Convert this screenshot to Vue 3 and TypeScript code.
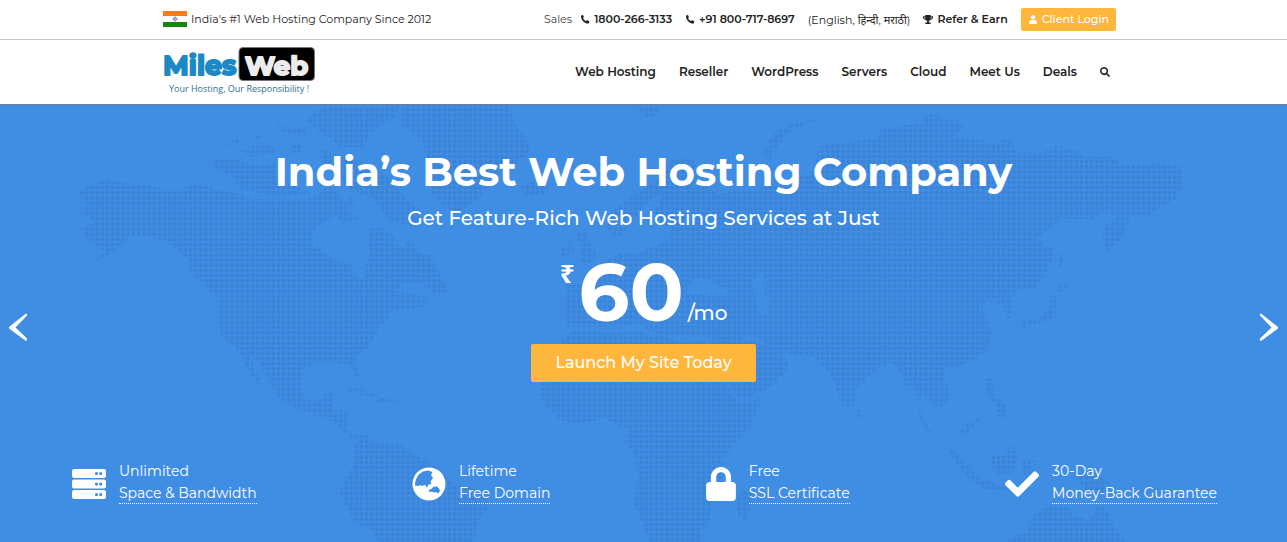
<script setup lang="ts">
interface NavItem {
  label: string
  href: string
}

interface Feature {
  icon: 'server' | 'globe' | 'lock' | 'check'
  title: string
  detail: string
}

const nav: NavItem[] = [
  { label: 'Web Hosting', href: '#web-hosting' },
  { label: 'Reseller', href: '#reseller' },
  { label: 'WordPress', href: '#wordpress' },
  { label: 'Servers', href: '#servers' },
  { label: 'Cloud', href: '#cloud' },
  { label: 'Meet Us', href: '#meet-us' },
  { label: 'Deals', href: '#deals' },
]

const phones: string[] = ['1800-266-3133', '+91 800-717-8697']

const features: Feature[] = [
  { icon: 'server', title: 'Unlimited', detail: 'Space & Bandwidth' },
  { icon: 'globe', title: 'Lifetime', detail: 'Free Domain' },
  { icon: 'lock', title: 'Free', detail: 'SSL Certificate' },
  { icon: 'check', title: '30-Day', detail: 'Money-Back Guarantee' },
]

// Coastlines of the dotted world map behind the banner.
const land: string[] = [
  // North and Central America
  '78,88 90,80 110,74 125,78 150,81 175,87 190,80 205,79 215,84 235,88 250,94 275,94 300,95 315,92 325,83 335,82 338,92 345,97 352,92 355,100 345,103 350,112 340,108 325,116 312,127 312,138 320,145 335,155 350,158 355,170 362,175 366,160 370,150 368,124 380,122 392,130 398,142 404,142 410,134 418,148 430,155 430,176 405,178 396,186 410,188 430,194 425,201 405,204 390,205 388,216 378,220 376,230 370,240 358,250 355,256 360,272 356,272 350,260 335,258 315,258 303,264 300,280 303,293 312,297 322,294 326,287 335,288 332,305 348,307 346,318 346,324 354,330 368,330 376,334 365,337 352,334 340,322 325,312 305,307 285,299 277,290 265,268 255,253 250,250 262,282 258,280 246,262 238,245 228,238 217,222 217,195 205,180 190,166 187,155 180,146 165,136 145,131 130,131 118,144 105,152 90,158 106,148 98,141 88,135 80,124 95,118 88,112 75,106 88,100',
  '410,150 430,150 448,184 446,190 434,190 420,176',
  // Canadian Arctic
  '212,64 215,54 235,54 245,58 262,60 275,58 280,75 312,88 285,92 240,84 232,70',
  '223,42 236,33 242,38 230,40',
  '240,45 256,40 275,42 276,48 250,52',
  '277,20 290,22 308,24 306,30 284,28',
  '290,40 302,40 302,48 290,48',
  '253,31 262,30 261,34 253,34',
  '305,15 325,2 400,0 395,12 378,22 370,32 362,42 340,42 330,34 318,25',
  '320,42 335,50 370,60 392,75 402,90 420,105 418,118 400,119 385,112 372,92 350,86 338,70 322,56',
  '335,108 346,106 360,114 342,117',
  // Greenland and Iceland
  '403,0 508,0 516,20 523,30 530,42 528,50 510,62 495,68 488,82 475,97 460,106 445,103 432,88 427,60 422,34 410,26 402,20',
  '520,82 535,76 549,80 545,90 525,90',
  // Caribbean
  '345,286 354,282 368,286 378,293 366,291',
  '370,298 382,293 404,297 390,298',
  // South America
  '355,340 362,335 378,338 400,338 406,345 420,353 430,358 447,372 455,380 475,383 489,392 488,402 478,418 474,438 379,438 372,426 358,420 345,400 340,388 347,370 353,362',
  // Svalbard and Novaya Zemlya
  '634,1 662,1 656,8 648,14 643,8',
  '762,50 768,38 778,25 795,18 820,13 800,22 786,29 775,45 770,54',
  // British Isles
  '574,130 585,124 590,140 599,150 590,158 580,156 582,142',
  '560,144 572,138 574,148 562,152',
  // Africa
  '573,226 610,228 640,226 650,232 665,230 680,238 705,236 710,250 720,268 730,285 738,298 761,294 758,304 750,322 735,338 723,354 722,378 711,400 710,414 702,425 700,438 650,438 640,412 633,396 638,375 635,350 625,338 628,324 615,320 605,312 590,317 568,318 556,312 546,300 538,288 542,275 556,250 562,235',
  '737,390 755,380 752,396 744,418 737,408',
  // Arabia
  '720,226 758,238 778,244 789,258 785,268 770,282 750,292 738,294 729,278 718,254 708,236',
  // Europe and Asia
  '565,222 565,180 586,180 600,176 598,164 608,154 622,148 634,150 652,142 668,136 672,124 660,120 655,106 664,90 655,90 645,100 632,116 622,130 612,134 607,120 614,106 630,92 645,84 660,74 672,54 690,52 700,68 690,83 705,82 720,90 735,84 750,86 770,80 790,74 815,66 818,42 835,38 857,36 878,34 880,25 905,20 920,18 927,9 936,10 945,15 960,16 963,22 954,32 980,35 1000,40 1000,34 1012,36 1017,50 1025,46 1038,49 1055,41 1075,45 1085,52 1115,52 1120,59 1150,60 1152,57 1181,62 1182,80 1175,95 1155,105 1150,110 1130,110 1127,122 1120,136 1108,149 1103,138 1103,124 1116,112 1105,105 1092,115 1060,113 1048,124 1037,134 1045,142 1054,144 1052,154 1045,170 1037,182 1020,185 1010,195 1015,210 1008,214 1002,202 996,194 986,196 982,204 988,216 992,228 987,245 975,255 955,262 945,263 945,275 951,290 945,300 938,303 930,294 922,288 918,300 922,312 934,330 925,325 918,308 916,285 912,280 904,280 898,262 890,258 877,263 865,275 857,282 854,298 848,306 840,295 834,275 825,263 815,252 790,250 782,248 765,238 750,230 715,236 700,230 660,230 640,220 600,222',
  '857,304 861,306 861,312 857,313',
  // Japan
  '1058,145 1064,158 1060,162 1057,150',
  '1057,180 1069,181 1062,186 1057,188',
  '1052,182 1057,195 1054,212 1045,216 1020,224 1022,217 1042,212 1050,200',
  // South-east Asia
  '985,275 992,272 994,290 1004,298 1007,312 998,313 996,300 988,290',
  '956,330 968,318 982,312 975,320 966,330',
  '989,352 1005,350 1010,340 1019,348 1016,358 1012,370 996,368',
  '944,340 955,347 968,360 980,374 1005,382 1015,386 985,384 970,376 958,362',
  '1022,356 1040,354 1030,360 1032,370 1022,370',
  '1075,370 1095,368 1108,376 1120,392 1100,388 1085,386',
  // Australia
  '1003,438 1028,424 1033,410 1045,403 1068,400 1072,410 1090,416 1098,400 1106,402 1112,418 1126,438',
]

// Black Sea and Caspian Sea
const water: string[] = [
  '686,184 694,174 704,172 712,178 728,184 724,192 700,190 688,190',
  '750,174 762,168 766,178 764,190 770,196 768,212 758,210 756,192',
]
</script>

<template>
  <div class="page">
    <div class="topbar">
      <div class="container topbar-row">
        <div class="claim">
          <svg class="flag" viewBox="0 0 24 16" aria-hidden="true">
            <rect width="24" height="16" fill="#fff" />
            <rect width="24" height="5" fill="#ff7a12" />
            <rect y="11" width="24" height="5" fill="#138808" />
            <circle cx="12" cy="8" r="1.6" fill="none" stroke="#8c8cc4" />
            <path d="M12 5v6M9 8h6" stroke="#6a6ab8" stroke-width=".5" />
          </svg>
          <span>India's #1 Web Hosting Company Since 2012</span>
        </div>
        <div class="contact">
          <span class="sales">Sales</span>
          <a v-for="phone in phones" :key="phone" class="strong-link phone" :href="'tel:' + phone">
            <svg class="mini" viewBox="0 0 512 512" aria-hidden="true">
              <path d="M150 14 190 110c4 10 2 20-6 27l-42 36c34 76 90 134 170 176l38-48c7-8 18-11 28-7l106 42c11 5 17 17 14 28l-24 102c-3 12-13 20-25 20C220 482 30 290 30 56c0-12 8-22 20-25L122 2c12-3 23 2 28 12z" />
            </svg>
            {{ phone }}
          </a>
          <span class="langs">(English, हिन्दी, मराठी)</span>
          <a class="strong-link refer" href="#refer">
            <svg class="mini" viewBox="0 0 576 512" aria-hidden="true">
              <path d="M552 64H448V24c0-13.3-10.7-24-24-24H152c-13.3 0-24 10.700-24 24v40H24C10.700 64 0 74.700 0 88v56c0 35.700 22.500 72.400 61.900 100.700 31.500 22.700 69.800 37.100 110 41.700C203.300 338.500 240 360 240 360v72h-48c-35.300 0-64 20.700-64 56v12c0 6.600 5.400 12 12 12h296c6.600 0 12-5.400 12-12v-12c0-35.300-28.700-56-64-56h-48v-72s36.700-21.500 68.100-73.600c40.300-4.600 78.600-19 110-41.700 39.300-28.300 61.900-65 61.900-100.700V88c0-13.300-10.700-24-24-24zM99.300 192.800C74.900 175.200 64 155.600 64 144v-16h64.200c1 32.600 5.800 61.200 12.800 86.200-15.100-5.200-29.200-12.400-41.700-21.400zM512 144c0 16.100-17.700 36.100-35.300 48.800-12.500 9-26.700 16.200-41.800 21.400 7-25 11.800-53.600 12.800-86.200H512v16z" />
            </svg>
            Refer &amp; Earn
          </a>
          <a class="login" href="#login">
            <svg class="mini" viewBox="0 0 448 512" aria-hidden="true">
              <path d="M224 256c70.700 0 128-57.300 128-128S294.700 0 224 0 96 57.300 96 128s57.300 128 128 128zm89.600 32h-16.700c-22.200 10.200-46.900 16-72.900 16s-50.600-5.800-72.900-16h-16.700C60.200 288 0 348.200 0 422.400V464c0 26.500 21.500 48 48 48h352c26.500 0 48-21.500 48-48v-41.600c0-74.200-60.200-134.400-134.400-134.400z" />
            </svg>
            Client Login
          </a>
        </div>
      </div>
    </div>

    <header class="header">
      <div class="container header-row">
        <a class="logo" href="#home">
          <svg class="brand" viewBox="0 0 152 34">
            <rect x="76" y="0.5" width="75.500" height="33" rx="4" fill="#000" stroke="#777" />
            <text class="brand-miles" x="0" y="28">Miles</text>
            <text class="brand-web" x="82" y="28">Web</text>
          </svg>
          <span class="tagline">Your Hosting, Our Responsibility !</span>
        </a>
        <nav class="nav">
          <a v-for="item in nav" :key="item.label" :href="item.href">{{ item.label }}</a>
          <button class="search" type="button" aria-label="Search">
            <svg viewBox="0 0 512 512" aria-hidden="true">
              <path d="M505 442.700L405.300 343c-4.500-4.500-10.600-7-17-7H372c27.600-35.300 44-79.700 44-128C416 93.100 322.900 0 208 0S0 93.100 0 208s93.100 208 208 208c48.300 0 92.700-16.400 128-44v16.300c0 6.400 2.500 12.500 7 17l99.700 99.700c9.400 9.400 24.600 9.400 33.900 0l28.300-28.300c9.400-9.400 9.400-24.600.1-34zM208 336c-70.700 0-128-57.200-128-128 0-70.700 57.200-128 128-128 70.700 0 128 57.200 128 128 0 70.700-57.200 128-128 128z" />
            </svg>
          </button>
        </nav>
      </div>
    </header>

    <main class="hero">
      <svg class="map" viewBox="0 0 1287 438" preserveAspectRatio="xMidYMin slice" aria-hidden="true">
        <defs>
          <pattern id="dots" x="1.4" y="2.4" width="5.18" height="5.18" patternUnits="userSpaceOnUse">
            <circle cx="2.59" cy="2.59" r="2.1" />
          </pattern>
        </defs>
        <polygon v-for="shape in land" :key="shape" :points="shape" fill="url(#dots)" />
        <polygon v-for="shape in water" :key="shape" class="water" :points="shape" />
      </svg>

      <button class="arrow prev" type="button" aria-label="Previous slide">
        <svg viewBox="0 0 20 30" aria-hidden="true"><path d="M18 1.500Q19.500 1.500 19 3.500L7.500 15.500 19 26.500Q19.500 28.500 18 29L1 16.500V15Z" /></svg>
      </button>
      <button class="arrow next" type="button" aria-label="Next slide">
        <svg viewBox="0 0 20 30" aria-hidden="true"><path d="M2 1.500Q.5 1.500 1 3.500L12.500 15.500 1 26.500Q.5 28.500 2 29L19 16.500V15Z" /></svg>
      </button>

      <h1>India’s Best Web Hosting Company</h1>
      <p class="sub">Get Feature-Rich Web Hosting Services at Just</p>
      <p class="price"><span class="rupee">₹</span><span class="amount">60</span><span class="per">/mo</span></p>
      <a class="launch" href="#launch">Launch My Site Today</a>

      <ul class="features">
        <li v-for="feature in features" :key="feature.title">
          <svg v-if="feature.icon === 'server'" class="icon" viewBox="0 0 34 34" aria-hidden="true">
            <path fill-rule="evenodd" d="M2 2h30a2 2 0 0 1 2 2v5a2 2 0 0 1-2 2H2a2 2 0 0 1-2-2V4a2 2 0 0 1 2-2zM24.500 5a1.600 1.600 0 1 0 0 3.200a1.600 1.600 0 0 0 0-3.200zM28.700 5a1.600 1.600 0 1 0 0 3.200a1.600 1.600 0 0 0 0-3.200zM2 12.500h30a2 2 0 0 1 2 2v5a2 2 0 0 1-2 2H2a2 2 0 0 1-2-2v-5a2 2 0 0 1 2-2zM24.500 15.500a1.600 1.600 0 1 0 0 3.200a1.600 1.600 0 0 0 0-3.200zM28.700 15.500a1.600 1.600 0 1 0 0 3.200a1.600 1.600 0 0 0 0-3.200zM2 23h30a2 2 0 0 1 2 2v5a2 2 0 0 1-2 2H2a2 2 0 0 1-2-2v-5a2 2 0 0 1 2-2zM24.500 26a1.600 1.600 0 1 0 0 3.200a1.600 1.600 0 0 0 0-3.200zM28.700 26a1.600 1.600 0 1 0 0 3.200a1.600 1.600 0 0 0 0-3.200z" />
          </svg>
          <svg v-else-if="feature.icon === 'globe'" class="icon" viewBox="0 0 34 34" aria-hidden="true">
            <circle cx="17" cy="17" r="16.500" />
            <path class="sea" d="M3 18.500C3 10 8 4 16 3.500l4.500 1.500-1.500 3 2 3-2.500 3.500 1 2.500-3 .5-1.500 3-2-2.500-3.500 1-1-1-2.500 1zM17 23l3-1.500 1.500-2 2 .5 1-1 2.500 2.500 1 2.500-2 2.500-2-1.500-2.500.5-1.500-1-3 .5z" />
          </svg>
          <svg v-else-if="feature.icon === 'lock'" class="icon lock" viewBox="0 0 448 512" aria-hidden="true">
            <path d="M400 224h-24v-72C376 68.200 307.800 0 224 0S72 68.200 72 152v72H48c-26.500 0-48 21.500-48 48v192c0 26.500 21.500 48 48 48h352c26.500 0 48-21.500 48-48V272c0-26.500-21.500-48-48-48zm-104 0H152v-72c0-39.700 32.300-72 72-72s72 32.300 72 72v72z" />
          </svg>
          <svg v-else class="icon" viewBox="0 0 512 512" aria-hidden="true">
            <path d="M173.898 439.404l-166.400-166.400c-9.997-9.997-9.997-26.206 0-36.204l36.203-36.204c9.997-9.998 26.207-9.998 36.204 0L192 312.690 432.095 72.596c9.997-9.997 26.207-9.997 36.204 0l36.203 36.204c9.997 9.997 9.997 26.206 0 36.204l-294.400 294.401c-9.998 9.997-26.207 9.997-36.204-.001z" />
          </svg>
          <div class="feature-text">
            <span>{{ feature.title }}</span>
            <span class="detail">{{ feature.detail }}</span>
          </div>
        </li>
      </ul>
    </main>
  </div>
</template>

<style>
body {
  margin: 0;
}
</style>

<style scoped>
.page {
  display: flex;
  flex-direction: column;
  min-height: 100vh;
  font-family: Montserrat, Inter, "Noto Sans", sans-serif;
  color: #222;
  background: #fff;
}

.page *,
.page *::before {
  box-sizing: border-box;
}

a {
  color: inherit;
  text-decoration: none;
}

button {
  padding: 0;
  border: 0;
  background: none;
  cursor: pointer;
}

svg {
  display: block;
  flex: none;
}

.container {
  max-width: 961px;
  margin: 0 auto;
  padding-right: 8px;
}

.topbar {
  border-bottom: 1px solid #c4c4c4;
}

.topbar-row {
  display: flex;
  align-items: center;
  justify-content: space-between;
  height: 39px;
  padding-bottom: 1px;
  font-size: 11px;
  white-space: nowrap;
}

.claim,
.contact,
.strong-link,
.login {
  display: flex;
  align-items: center;
}

.claim {
  gap: 4px;
}

.flag {
  width: 24px;
  height: 16px;
}

.contact {
  gap: 13px;
}

.sales {
  margin-right: -5px;
  color: #444;
}

.strong-link {
  gap: 4px;
  font-weight: 600;
}

.mini {
  height: 9px;
  width: 10px;
  fill: currentColor;
}

.login {
  gap: 4px;
  height: 23px;
  padding: 0 7px;
  border-radius: 2px;
  background: #ffb63c;
  color: #fff;
  font-weight: 500;
}

.header {
  border-bottom: 1px solid #6b7f95;
}

.header-row {
  display: flex;
  align-items: center;
  justify-content: space-between;
  height: 64px;
  padding-bottom: 1px;
}

.logo {
  display: flex;
  flex-direction: column;
  width: 152px;
}

.brand {
  width: 152px;
  height: 34px;
}

.brand text {
  font-size: 27px;
  font-weight: 700;
  stroke-width: 2px;
  stroke-linejoin: round;
}

.brand .brand-web {
  font-size: 26px;
}

.brand-miles {
  fill: #1b8ac4;
  stroke: #1b8ac4;
}

.brand-web {
  fill: #ececec;
  stroke: #ececec;
}

.tagline {
  font-family: "Open Sans", sans-serif;
  font-size: 9px;
  font-weight: 500;
  line-height: 15px;
  text-align: center;
  color: #2a6f96;
}

.nav {
  display: flex;
  align-items: center;
  gap: 23px;
  padding-right: 6px;
  font-size: 12px;
  font-weight: 600;
  white-space: nowrap;
}

.search svg {
  width: 10px;
  height: 10px;
  fill: #222;
}

.hero {
  position: relative;
  flex: 1;
  display: flex;
  flex-direction: column;
  align-items: center;
  background: #3f8ee4;
  color: #fff;
}

.map {
  position: absolute;
  inset: 0;
  width: 100%;
  height: 100%;
}

.map circle {
  fill: #3b83d6;
}

.water {
  fill: #3f8ee4;
}

.arrow {
  position: absolute;
  top: 207px;
}

.arrow svg {
  width: 20px;
  height: 30px;
  fill: #fff;
}

.prev {
  left: 8px;
}

.next {
  right: 8px;
}

h1,
.sub,
.price,
.launch,
.features {
  position: relative;
  margin: 0;
}

h1 {
  padding-top: 42px;
  font-size: 40px;
  font-weight: 700;
  line-height: 50px;
}

.sub {
  padding-top: 8px;
  font-size: 20px;
  font-weight: 500;
  line-height: 26px;
}

.price {
  display: flex;
  align-items: flex-start;
  margin-top: 22px;
  height: 80px;
}

.rupee {
  margin-top: 8px;
  margin-right: 4px;
  font-family: "Noto Sans", sans-serif;
  font-size: 26px;
  font-weight: 700;
  line-height: 24px;
}

.amount {
  font-size: 80px;
  font-weight: 700;
  line-height: 80px;
}

.per {
  align-self: flex-end;
  margin-left: 4px;
  font-size: 20px;
  font-weight: 500;
  line-height: 40px;
}

.launch {
  margin-top: 11px;
  padding: 0 24px;
  border-radius: 2px;
  background: #ffb63c;
  font-size: 16px;
  font-weight: 500;
  line-height: 38px;
}

.features {
  display: flex;
  justify-content: space-between;
  align-self: stretch;
  margin-top: auto;
  padding: 40px 70px 38px 72px;
  list-style: none;
}

.features li {
  display: flex;
  align-items: center;
  gap: 13px;
}

.icon {
  width: 34px;
  height: 34px;
  margin-top: 4px;
  fill: #fff;
}

.lock {
  width: 30px;
}

.sea {
  fill: #3f8ee4;
}

.feature-text {
  display: flex;
  flex-direction: column;
  font-size: 14px;
  line-height: 23px;
}

.detail {
  border-bottom: 1px dotted #fff;
  line-height: 20px;
}
</style>
